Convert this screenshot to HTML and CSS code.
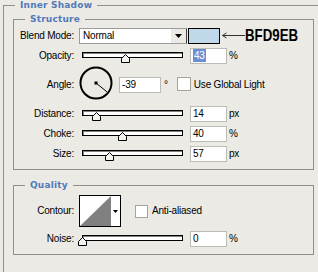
FILE: index.html
```html
<!DOCTYPE html>
<html lang="en">
<head>
  <meta charset="UTF-8">
  <meta name="viewport" content="width=device-width, initial-scale=1.0">
  <title>Inner Shadow</title>
  <link rel="stylesheet" href="styles.css">
</head>
<body>
  <fieldset class="panel">
    <legend class="panel-title">Inner Shadow</legend>

    <!-- Structure group -->
    <fieldset class="group">
      <legend class="group-title">Structure</legend>
      <div class="rows">
        <div class="row">
          <span class="lbl">Blend Mode:</span>
          <div class="select">
            <span class="select-text">Normal</span>
            <span class="select-btn">
              <svg width="7" height="4" viewBox="0 0 7 4"><polygon points="0,0 7,0 3.5,4" fill="#000"/></svg>
            </span>
          </div>
          <span class="swatch"></span>
          <svg class="pointer" width="25" height="16" viewBox="0 0 25 16">
            <path d="M2.5 7.5H25M2.5 7.5L6.5 5M2.5 7.5L6.5 10" fill="none" stroke="#333" stroke-width="1"/>
          </svg>
          <span class="hex">BFD9EB</span>
        </div>

        <div class="row">
          <span class="lbl">Opacity:</span>
          <div class="slider">
            <span class="track"></span>
            <svg class="thumb" style="left: 42px" width="9" height="9" viewBox="0 0 9 9"><polygon points="0.5,8.5 0.5,4.5 4.5,0.5 8.5,4.5 8.5,8.5"/></svg>
          </div>
          <span class="field"><span class="sel">43</span></span>
          <span class="unit">%</span>
        </div>

        <div class="row angle">
          <span class="lbl">Angle:</span>
          <svg class="dial" width="34" height="34" viewBox="0 0 34 34">
            <circle cx="17" cy="17" r="15.5" fill="none" stroke="#000" stroke-width="2"/>
            <line x1="17" y1="17" x2="27.9" y2="25.8" stroke="#000" stroke-width="1"/>
            <rect x="15.5" y="15.5" width="3" height="3" fill="#000"/>
          </svg>
          <span class="field wide">-39</span>
          <span class="deg">°</span>
          <span class="check global"></span>
          <span class="check-text">Use Global Light</span>
        </div>

        <div class="row">
          <span class="lbl">Distance:</span>
          <div class="slider">
            <span class="track"></span>
            <svg class="thumb" style="left: 13px" width="9" height="9" viewBox="0 0 9 9"><polygon points="0.5,8.5 0.5,4.5 4.5,0.5 8.5,4.5 8.5,8.5"/></svg>
          </div>
          <span class="field">14</span>
          <span class="unit">px</span>
        </div>

        <div class="row">
          <span class="lbl">Choke:</span>
          <div class="slider">
            <span class="track"></span>
            <svg class="thumb" style="left: 39px" width="9" height="9" viewBox="0 0 9 9"><polygon points="0.5,8.5 0.5,4.5 4.5,0.5 8.5,4.5 8.5,8.5"/></svg>
          </div>
          <span class="field">40</span>
          <span class="unit">%</span>
        </div>

        <div class="row">
          <span class="lbl">Size:</span>
          <div class="slider">
            <span class="track"></span>
            <svg class="thumb" style="left: 26px" width="9" height="9" viewBox="0 0 9 9"><polygon points="0.5,8.5 0.5,4.5 4.5,0.5 8.5,4.5 8.5,8.5"/></svg>
          </div>
          <span class="field">57</span>
          <span class="unit">px</span>
        </div>
      </div>
    </fieldset>

    <!-- Quality group -->
    <fieldset class="group quality">
      <legend class="group-title">Quality</legend>
      <div class="rows">
        <div class="row contour-row">
          <span class="lbl">Contour:</span>
          <div class="contour">
            <svg width="31" height="30" viewBox="0 0 31 30"><polygon points="0,30 31,0 31,30" fill="#808080"/></svg>
            <span class="contour-btn">
              <svg width="5" height="3" viewBox="0 0 5 3"><polygon points="0,0 5,0 2.5,3" fill="#000"/></svg>
            </span>
          </div>
          <span class="check anti"></span>
          <span class="check-text anti-text">Anti-aliased</span>
        </div>

        <div class="row">
          <span class="lbl">Noise:</span>
          <div class="slider">
            <span class="track"></span>
            <svg class="thumb" style="left: -1px" width="9" height="9" viewBox="0 0 9 9"><polygon points="0.5,8.5 0.5,4.5 4.5,0.5 8.5,4.5 8.5,8.5"/></svg>
          </div>
          <span class="field">0</span>
          <span class="unit">%</span>
        </div>
      </div>
    </fieldset>
  </fieldset>
</body>
</html>
```

FILE: styles.css
```css
body {
  margin: 0;
  background-color: #ebeae4;
  font-family: "Liberation Sans", Arial, sans-serif;
  font-size: 10px;
  letter-spacing: -0.2px;
  color: #000;
}
legend {
  font-family: "DejaVu Sans", Verdana, sans-serif;
  font-weight: bold;
  font-size: 9px;
  line-height: 11px;
  letter-spacing: 0.2px;
  color: #5279ba;
  padding: 0 5px;
}
.panel {
  box-sizing: border-box;
  width: 310px;
  margin: 0 0 0 3px;
  padding: 3px 8px 17px 9px;
  border: 1px solid #8e8e8e;
}
.panel-title {
  margin-left: 2px;
}
.group {
  margin: 0;
  padding: 3px 0 7px;
  border: 1px solid #8e8e8e;
}
.group-title {
  margin-left: 11px;
}
.quality {
  margin-top: 10px;
  padding-top: 4px;
}
.rows {
  display: flex;
  flex-direction: column;
  gap: 4px;
}
.row {
  display: flex;
  align-items: center;
  height: 16px;
  line-height: 16px;
}
.lbl {
  flex: none;
  width: 60px;
  margin-right: 5px;
  text-align: right;
}

/* blend mode select */
.select {
  display: flex;
  box-sizing: border-box;
  width: 108px;
  height: 16px;
  border: 1px solid #9c9c9c;
  border-right-color: #404040;
  background-color: #fff;
}
.select-text {
  flex: 1;
  padding-left: 3px;
  line-height: 14px;
}
.select-btn {
  display: flex;
  align-items: center;
  justify-content: center;
  width: 15px;
  background-color: #ebeae4;
}
.swatch {
  box-sizing: border-box;
  width: 32px;
  height: 16px;
  margin-left: 1px;
  border: 1px solid #000;
  background-color: #bfd9eb;
}
.pointer {
  flex: none;
}
.hex {
  display: inline-block;
  font-weight: bold;
  font-size: 17px;
  line-height: 16px;
  letter-spacing: 0;
  transform: scaleX(0.78);
  transform-origin: left center;
}

/* sliders */
.slider {
  position: relative;
  flex: none;
  width: 111px;
  height: 16px;
}
.track {
  display: block;
  box-sizing: border-box;
  width: 101px;
  height: 6px;
  margin: 4px 0 0 3px;
  border: 1px solid #000;
  background-color: #fff;
  box-shadow: inset 1px 1px 0 #808080;
}
.thumb {
  position: absolute;
  top: 6px;
}
.thumb polygon {
  fill: #f2f2f0;
  stroke: #000;
  stroke-width: 1;
}

/* number fields */
.field {
  box-sizing: border-box;
  width: 37px;
  height: 16px;
  padding-left: 2px;
  border: 1px solid #bcbcb6;
  background-color: #fff;
  line-height: 14px;
}
.sel {
  display: inline-block;
  padding: 0 1px;
  background-color: #6a8fd2;
  color: #fff;
  line-height: 13px;
}
.unit {
  margin-left: 2px;
}

/* angle row */
.angle {
  align-items: flex-start;
  height: 34px;
  margin: -2px 0 2px;
}
.angle .lbl,
.angle .field,
.angle .deg,
.angle .check,
.angle .check-text {
  margin-top: 11px;
}
.dial {
  flex: none;
}
.field.wide {
  width: 42px;
  margin-left: 6px;
}
.deg {
  margin-left: 3px;
}
.check {
  flex: none;
  box-sizing: border-box;
  width: 14px;
  height: 14px;
  border: 1px solid #a4a49c;
  background-color: #fff;
}
.check.global {
  margin-left: 9px;
}
.check-text {
  margin-left: 3px;
}

/* contour row */
.contour-row {
  height: 32px;
}
.contour {
  display: flex;
  box-sizing: border-box;
  width: 42px;
  height: 32px;
  border: 1px solid #000;
  background-color: #fff;
}
.contour-btn {
  display: flex;
  align-items: center;
  justify-content: center;
  flex: 1;
}
.check.anti {
  width: 13px;
  height: 13px;
  margin-left: 14px;
}
.anti-text {
  margin-left: 4px;
}
```
